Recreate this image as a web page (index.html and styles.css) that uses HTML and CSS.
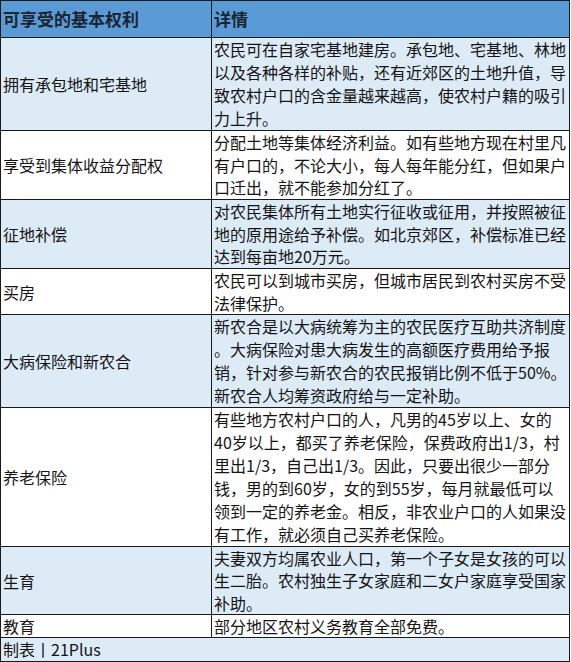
FILE: index.html
```html
<!DOCTYPE html>
<html lang="zh-CN">
<head>
<meta charset="utf-8">
<title>可享受的基本权利</title>
<link rel="stylesheet" href="styles.css">
</head>
<body>
<table class="rights">
  <colgroup>
    <col class="c1">
    <col class="c2">
  </colgroup>
  <thead>
    <tr class="head">
      <th><div class="hd">可享受的基本权利</div></th>
      <th><div class="hd">详情</div></th>
    </tr>
  </thead>
  <tbody>
    <tr class="alt">
      <td><div class="l1">拥有承包地和宅基地</div></td>
      <td><div class="l4">农民可在自家宅基地建房。承包地、宅基地、林地<br>以及各种各样的补贴，还有近郊区的土地升值，导<br>致农村户口的含金量越来越高，使农村户籍的吸引<br>力上升。</div></td>
    </tr>
    <tr>
      <td><div class="l1">享受到集体收益分配权</div></td>
      <td><div class="l3">分配土地等集体经济利益。如有些地方现在村里凡<br>有户口的，不论大小，每人每年能分红，但如果户<br>口迁出，就不能参加分红了。</div></td>
    </tr>
    <tr class="alt">
      <td><div class="l1">征地补偿</div></td>
      <td><div class="l3">对农民集体所有土地实行征收或征用，并按照被征<br>地的原用途给予补偿。如北京郊区，补偿标准已经<br>达到每亩地20万元。</div></td>
    </tr>
    <tr>
      <td><div class="l1">买房</div></td>
      <td><div class="l2">农民可以到城市买房，但城市居民到农村买房不受<br>法律保护。</div></td>
    </tr>
    <tr class="alt">
      <td><div class="l1">大病保险和新农合</div></td>
      <td><div class="l4">新农合是以大病统筹为主的农民医疗互助共济制度<br>。大病保险对患大病发生的高额医疗费用给予报<br>销，针对参与新农合的农民报销比例不低于50%。<br>新农合人均筹资政府给与一定补助。</div></td>
    </tr>
    <tr>
      <td><div class="l1">养老保险</div></td>
      <td><div class="l6">有些地方农村户口的人，凡男的45岁以上、女的<br>40岁以上，都买了养老保险，保费政府出1/3，村<br>里出1/3，自己出1/3。因此，只要出很少一部分<br>钱，男的到60岁，女的到55岁，每月就最低可以<br>领到一定的养老金。相反，非农业户口的人如果没<br>有工作，就必须自己买养老保险。</div></td>
    </tr>
    <tr class="alt">
      <td><div class="l1">生育</div></td>
      <td><div class="l3 tight">夫妻双方均属农业人口，第一个子女是女孩的可以<br>生二胎。农村独生子女家庭和二女户家庭享受国家<br>补助。</div></td>
    </tr>
    <tr>
      <td><div class="l1">教育</div></td>
      <td><div class="l1">部分地区农村义务教育全部免费。</div></td>
    </tr>
  </tbody>
  <tfoot>
    <tr class="alt foot">
      <td colspan="2"><div class="l1 ft">制表丨21Plus</div></td>
    </tr>
  </tfoot>
</table>
</body>
</html>
```

FILE: styles.css
```css
html, body {
  margin: 0;
  padding: 0;
  background: #ffffff;
}

.rights {
  border-collapse: collapse;
  width: 569px;
  table-layout: fixed;
  font-family: "Noto Sans CJK SC", "Noto Sans", sans-serif;
  font-size: 16px;
  line-height: 23px;
  color: #141414;
}

.c1 { width: 211px; }
.c2 { width: 358px; }

.rights th,
.rights td {
  border: 1px solid #1a1a1a;
  padding: 0 0 0 2px;
  text-align: left;
  vertical-align: middle;
  white-space: nowrap;
}

.rights div {
  overflow: hidden;
}

.hd {
  height: 36px;
  line-height: 36px;
}

.l1 { height: 22px; line-height: 22px; }
.l2 { height: 45px; line-height: 22.5px; }
.l3 { height: 68px; line-height: 22.67px; }
.l4 { height: 92px; line-height: 23px; }
.l6 { height: 138px; line-height: 23px; }
.tight { height: 67px; line-height: 22.33px; }
.ft { height: 23px; line-height: 23px; }

.head th {
  background: #5b9bd5;
  font-size: 17px;
  font-weight: bold;
  color: #1b2433;
}

.alt td {
  background: #ddebf7;
}
```
